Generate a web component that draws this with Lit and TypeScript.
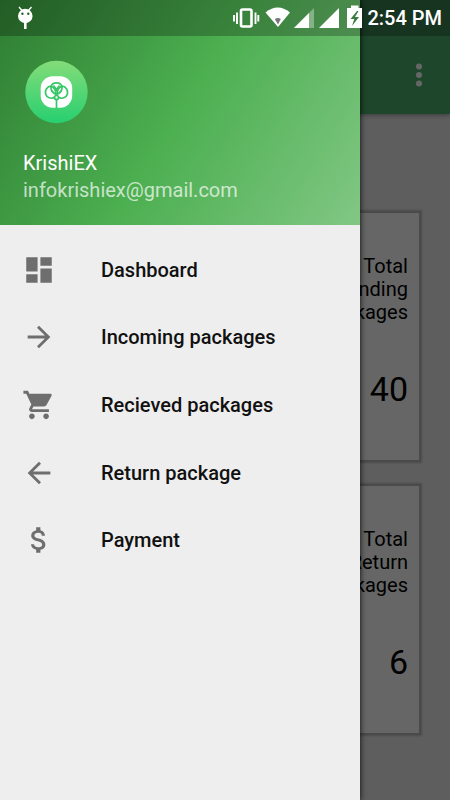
import { LitElement, html, css, svg } from "lit";
import { customElement, property } from "lit/decorators.js";

const icons = {
  dashboard: svg`<path d="M3 13h8V3H3v10zm0 8h8v-6H3v6zm10 0h8V11h-8v10zm0-18v6h8V3h-8z"/>`,
  forward: svg`<path d="M12 4l-1.41 1.41L16.17 11H4v2h12.17l-5.58 5.59L12 20l8-8z"/>`,
  cart: svg`<path d="M7 18c-1.1 0-1.99.9-1.99 2S5.9 22 7 22s2-.9 2-2-.9-2-2-2zM1 2v2h2l3.6 7.59-1.35 2.45c-.16.28-.25.61-.25.96 0 1.1.9 2 2 2h12v-2H7.42c-.14 0-.25-.11-.25-.25l.03-.12.9-1.63h7.45c.75 0 1.41-.41 1.75-1.03l3.58-6.49c.08-.14.12-.31.12-.48 0-.55-.45-1-1-1H5.21l-.94-2H1zm16 16c-1.1 0-1.99.9-1.99 2s.89 2 1.99 2 2-.9 2-2-.9-2-2-2z"/>`,
  back: svg`<path d="M20 11H7.83l5.59-5.59L12 4l-8 8 8 8 1.41-1.41L7.83 13H20v-2z"/>`,
  money: svg`<path d="M11.8 10.9c-2.27-.59-3-1.2-3-2.15 0-1.09 1.01-1.85 2.7-1.85 1.78 0 2.44.85 2.5 2.1h2.21c-.07-1.72-1.12-3.3-3.21-3.81V3h-3v2.16c-1.94.42-3.5 1.68-3.5 3.61 0 2.31 1.91 3.46 4.7 4.13 2.5.6 3 1.48 3 2.41 0 .69-.49 1.79-2.7 1.79-2.06 0-2.87-.92-2.98-2.1h-2.2c.12 2.19 1.76 3.42 3.68 3.83V21h3v-2.15c1.95-.37 3.5-1.5 3.5-3.55 0-2.84-2.43-3.81-4.7-4.4z"/>`,
};

const menu: { icon: keyof typeof icons; label: string }[] = [
  { icon: "dashboard", label: "Dashboard" },
  { icon: "forward", label: "Incoming packages" },
  { icon: "cart", label: "Recieved packages" },
  { icon: "back", label: "Return package" },
  { icon: "money", label: "Payment" },
];

@customElement("status-bar")
class StatusBar extends LitElement {
  static styles = css`
    :host {
      display: flex;
      justify-content: space-between;
      height: 36px;
      padding: 0 8px 0 15px;
      background: rgba(0, 0, 0, 0.25);
      color: #fff;
      fill: #fff;
    }
    .group {
      display: flex;
      align-items: center;
      gap: 4px;
    }
    svg {
      display: block;
    }
    time {
      font-size: 20px;
      font-weight: 500;
      line-height: 38px;
      white-space: nowrap;
    }
  `;
  render() {
    return html`
      <div class="group">
        <svg width="21" height="36" viewBox="15 0 21 36" aria-hidden="true">
          <path d="M19 7l3 3.500M31.500 7l-3 3.500" stroke="#fff" stroke-width="1.300" />
          <ellipse cx="25.300" cy="16" rx="7.300" ry="7.200" />
          <path d="M24 22h2.600v7H24z" />
          <circle cx="22.400" cy="13.700" r="1.200" fill="#2a602d" />
          <circle cx="28.300" cy="13.700" r="1.200" fill="#2a602d" />
        </svg>
      </div>
      <div class="group">
        <svg width="30" height="36" viewBox="230 0 30 36" aria-hidden="true">
          <rect x="240" y="9.500" width="10.500" height="17" rx="1.500" fill="none" stroke="#fff" stroke-width="2.600" />
          <path d="M236 12.500v11.500M233 15v6.500M254.500 12.500v11.500M257.300 15v6.500" stroke="#fff" stroke-width="1.900" />
        </svg>
        <svg width="25" height="36" viewBox="264 0 25 36" aria-hidden="true">
          <path d="M264.500 12.500Q276.800 2.500 289 12.500L277 27z" />
          <path d="M273.800 19q3.200-1.800 6 0l-2.800 5.500z" fill="#777" />
        </svg>
        <svg width="21" height="36" viewBox="292 0 21 36" aria-hidden="true">
          <path d="M312 8v20h-20z" opacity="0.35" />
          <path d="M307 13v15h-15z" />
        </svg>
        <svg width="21" height="36" viewBox="317 0 21 36" aria-hidden="true">
          <path d="M337 8v20h-20z" />
        </svg>
        <svg width="19" height="36" viewBox="342 0 19 36" aria-hidden="true">
          <path d="M345 8h4V5.500h7.500V8H360v20h-15z" />
          <path d="M355 11l-6.500 8h3.800l-2.300 7 7-9h-4l3.500-6z" fill="#3a7d3f" />
        </svg>
        <time>2:54 PM</time>
      </div>
    `;
  }
}

@customElement("stat-card")
class StatCard extends LitElement {
  @property() label = "";
  @property() value = "";
  static styles = css`
    :host {
      display: flex;
      flex-direction: column;
      align-items: flex-end;
      gap: 42px;
      padding: 42px 11px 48px;
      border: 2px solid #b9b9b9;
      background: #fff;
      box-shadow: 0 0 2px 1px rgba(0, 0, 0, 0.2);
      color: #000;
      text-align: right;
    }
    .label {
      width: 90px;
      font-size: 20px;
      line-height: 23px;
    }
    .value {
      font-size: 34px;
      line-height: 46px;
    }
  `;
  render() {
    return html`<div class="label">${this.label}</div>
      <div class="value">${this.value}</div>`;
  }
}

@customElement("nav-drawer")
class NavDrawer extends LitElement {
  static styles = css`
    :host {
      display: block;
      background: #eee;
      box-shadow: 0 0 6px rgba(0, 0, 0, 0.9);
      font-size: 20px;
    }
    .header {
      display: flex;
      flex-direction: column;
      align-items: flex-start;
      padding: 59px 23px 21px;
      background: linear-gradient(122deg, #2e7d32, #4caf50 50%, #81c784);
      color: #fff;
      line-height: 27px;
    }
    .avatar {
      display: block;
      margin-bottom: 25px;
    }
    .name {
      font-weight: 400;
      font-size: 20px;
      margin: 0;
    }
    .mail {
      color: rgba(255, 255, 255, 0.7);
      text-decoration: none;
    }
    ul {
      display: grid;
      grid-auto-rows: 1fr;
      min-height: 338px;
      margin: 0;
      padding: 11px 0 0;
      list-style: none;
    }
    .item {
      display: flex;
      align-items: center;
      gap: 45px;
      height: 100%;
      padding: 0 22px;
      color: #111;
      font-weight: 500;
      text-decoration: none;
    }
    .item svg {
      fill: #6e6e6e;
    }
  `;
  render() {
    return html`
      <header class="header">
        <svg class="avatar" width="66" height="66" viewBox="0 0 66 66" role="img" aria-label="KrishiEX">
          <defs>
            <linearGradient id="g" x1="0" y1="0" x2="0" y2="1">
              <stop offset="0" stop-color="#84dc79" />
              <stop offset="1" stop-color="#27cf70" />
            </linearGradient>
          </defs>
          <circle cx="33.500" cy="33" r="31.200" fill="url(#g)" />
          <rect x="17.700" y="17.200" width="31.500" height="31.500" rx="12" fill="#fff" />
          <g fill="none" stroke="#35c765" stroke-width="1.700">
            <path d="M33.500 49V40" />
            <path d="M31.500 38.300A6 6 0 1 1 28.200 27.200C31.500 28.500 33.300 32 33 37" />
            <path d="M35.500 38.300A6 6 0 1 0 38.800 27.200C35.500 28.500 33.700 32 34 37" />
            <path d="M28 27.500A5.700 5 0 0 1 39 27.500C39.500 31 37 34 33.500 35.500 30 34 27.500 31 28 27.500" />
            <path d="M30.500 26.500Q32 28 33.500 31 35 28 36.500 26.500" />
            <circle cx="33.500" cy="38.500" r="2" fill="#fff" />
          </g>
        </svg>
        <p class="name">KrishiEX</p>
        <a class="mail" href="mailto:infokrishiex@gmail.com">infokrishiex@gmail.com</a>
      </header>
      <nav>
        <ul>
          ${menu.map(
            (m) => html`<li>
              <a class="item" href="#">
                <svg width="34" height="34" viewBox="0 0 24 24" aria-hidden="true">${icons[m.icon]}</svg>
                <span>${m.label}</span>
              </a>
            </li>`
          )}
        </ul>
      </nav>
    `;
  }
}

@customElement("app-root")
class AppRoot extends LitElement {
  static styles = css`
    :host {
      display: block;
      position: relative;
      min-height: 100vh;
      overflow: hidden;
      background: #ebebeb;
      font-family: Roboto, "Noto Sans", sans-serif;
    }
    .bar {
      display: flex;
      justify-content: flex-end;
      align-items: center;
      padding: 36px 13px 0 0;
      background: #4daf6b;
      box-shadow: 0 1px 5px rgba(0, 0, 0, 0.4);
    }
    .more {
      display: block;
      width: 36px;
      height: 78px;
      padding: 0;
      border: 0;
      background: none;
      fill: #fff;
    }
    .more svg {
      display: block;
      margin: auto;
    }
    main {
      display: grid;
      gap: 22px;
      padding: 97px 29px 66px;
    }
    .scrim {
      position: absolute;
      inset: 0;
      background: rgba(0, 0, 0, 0.6);
    }
    nav-drawer {
      position: absolute;
      inset: 0 auto 0 0;
      width: 80%;
    }
    status-bar {
      position: absolute;
      inset: 0 0 auto 0;
    }
  `;
  render() {
    return html`
      <div class="bar">
        <button class="more" aria-label="More options">
          <svg width="6" height="24" viewBox="0 0 6 24" aria-hidden="true">
            <circle cx="3" cy="3.500" r="3" /><circle cx="3" cy="12" r="3" /><circle cx="3" cy="20.500" r="3" />
          </svg>
        </button>
      </div>
      <main>
        <stat-card label="Total Pending Packages" value="40"></stat-card>
        <stat-card label="Total Return Packages" value="6"></stat-card>
      </main>
      <div class="scrim"></div>
      <nav-drawer></nav-drawer>
      <status-bar></status-bar>
    `;
  }
}
